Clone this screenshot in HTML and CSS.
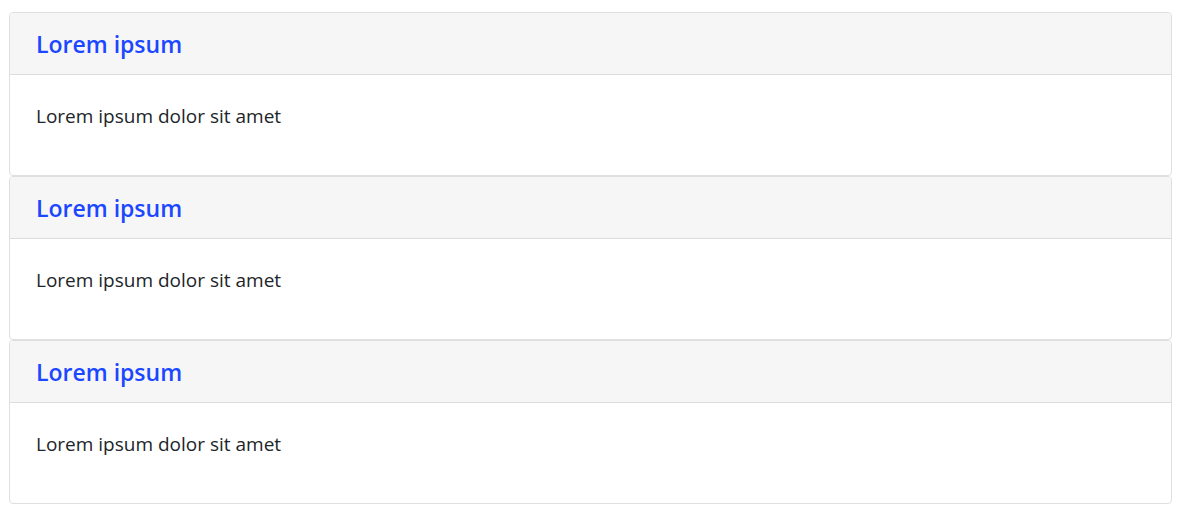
FILE: index.html
```html
<html>

<head>
	<link rel="stylesheet" href="styles.css">
</head>

<body>
	<div id="wrapper">
		<div class="card">
			<div class="card_header">
				<h3 class="card_title">Lorem ipsum</h3>
			</div>
			<div class="card_body">
				<p>Lorem ipsum dolor sit amet</p>
			</div>
		</div>
		<div class="card">
			<div class="card_header">
				<h3 class="card_title">Lorem ipsum</h3>
			</div>
			<div class="card_body">
				<p>Lorem ipsum dolor sit amet</p>
			</div>
		</div>
		<div class="card">
			<div class="card_header">
				<h3 class="card_title">Lorem ipsum</h3>
			</div>
			<div class="card_body">
				<p>Lorem ipsum dolor sit amet</p>
			</div>
		</div>
	</div>
</body>
</html>
```

FILE: styles.css
```css
* {
	margin: 0;
	padding: 0;
	box-sizing: border-box;
}

body {
	font-family: "Open Sans", "Noto Sans", sans-serif;
	color: #212529;
	background: #fff;
}

#wrapper {
	padding: 12px 11px 20px 9px;
}

.card {
	border: 1px solid #dfdfdf;
	border-radius: 4px;
	overflow: hidden;
}

.card_header {
	height: 62px;
	padding: 2px 26px 0 26px;
	display: flex;
	align-items: center;
	background: #f6f6f6;
	border-bottom: 1px solid #dcdcdc;
}

.card_title {
	font-size: 23px;
	font-weight: 600;
	color: #1a47ff;
	line-height: 1.2;
}

.card_body {
	height: 100px;
	padding: 28px 26px 0 26px;
}

.card_body p {
	font-size: 19px;
	line-height: 27px;
}
```
